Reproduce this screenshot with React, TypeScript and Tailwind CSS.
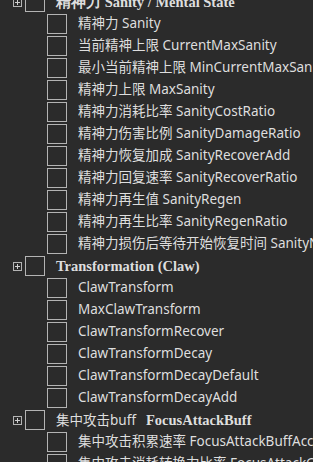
import React from "react";

type Item = { label: string };

type Group = {
  title: React.ReactNode;
  items: Item[];
};

const groups: Group[] = [
  {
    title: <span className="font-bold">精神力 Sanity / Mental State</span>,
    items: [
      { label: "精神力 Sanity" },
      { label: "当前精神上限 CurrentMaxSanity" },
      { label: "最小当前精神上限 MinCurrentMaxSanity" },
      { label: "精神力上限 MaxSanity" },
      { label: "精神力消耗比率 SanityCostRatio" },
      { label: "精神力伤害比例 SanityDamageRatio" },
      { label: "精神力恢复加成 SanityRecoverAdd" },
      { label: "精神力回复速率 SanityRecoverRatio" },
      { label: "精神力再生值 SanityRegen" },
      { label: "精神力再生比率 SanityRegenRatio" },
      { label: "精神力损伤后等待开始恢复时间 SanityNoRecoverTime" },
    ],
  },
  {
    title: <span className="font-bold">Transformation (Claw)</span>,
    items: [
      { label: "ClawTransform" },
      { label: "MaxClawTransform" },
      { label: "ClawTransformRecover" },
      { label: "ClawTransformDecay" },
      { label: "ClawTransformDecayDefault" },
      { label: "ClawTransformDecayAdd" },
    ],
  },
  {
    title: (
      <>
        <span className="font-['Noto_Sans','Noto_Sans_CJK_SC',sans-serif] text-[13.5px]">集中攻击buff</span>
        <span className="ml-[10px] font-bold">FocusAttackBuff</span>
      </>
    ),
    items: [
      { label: "集中攻击积累速率 FocusAttackBuffAccumulateRate" },
      { label: "集中攻击消耗转换力比率 FocusAttackConvertRatio" },
    ],
  },
];

const Box = () => (
  <div className="w-5 h-5 shrink-0 border border-[#b4b4b4] bg-[#2b2b2b]" />
);

const Expander = () => (
  <div className="relative w-[9px] h-[9px] shrink-0 border border-[#b4b4b4]">
    <div className="absolute left-[1px] right-[1px] top-[3px] h-px bg-[#d0d0d0]" />
    <div className="absolute top-[1px] bottom-[1px] left-[3px] w-px bg-[#d0d0d0]" />
  </div>
);

export default function App() {
  return (
    <div className="w-[313px] h-[462px] overflow-hidden bg-[#2b2b2b] text-[#dedede]">
      <div className="-mt-[9px] flex flex-col">
        {groups.map((g, gi) => (
          <div key={gi} className="flex flex-col">
            <div className="h-[22px] flex items-center whitespace-nowrap">
              <div className="ml-[13px] w-[12px] flex">
                <Expander />
              </div>
              <Box />
              <div className="ml-[11px] font-['Liberation_Serif',serif] text-[14.5px] leading-none">
                {g.title}
              </div>
            </div>
            {g.items.map((it, i) => (
              <div key={i} className="h-[22px] flex items-center whitespace-nowrap pl-[47px]">
                <Box />
                <span className="ml-[11px] font-['Noto_Sans','Noto_Sans_CJK_SC',sans-serif] text-[13.5px] leading-none">
                  {it.label}
                </span>
              </div>
            ))}
          </div>
        ))}
      </div>
    </div>
  );
}
